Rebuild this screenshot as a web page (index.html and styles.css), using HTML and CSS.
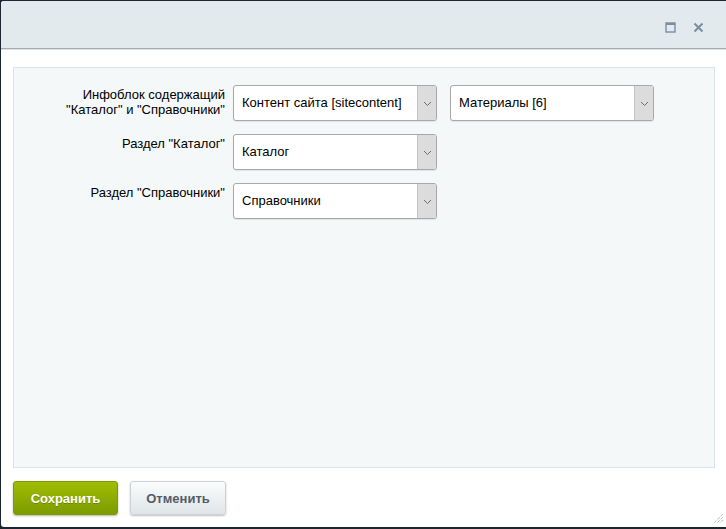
FILE: index.html
```html
<!DOCTYPE html>
<html lang="ru">
<head>
<meta charset="utf-8">
<title>Dialog</title>
<link rel="stylesheet" href="styles.css">
</head>
<body>
<div class="dialog">
  <div class="dialog-head">
    <span class="head-btn">
      <svg width="11" height="11" viewBox="0 0 11 11"><rect x="1" y="1" width="9" height="9" fill="none" stroke="#7b8ca1" stroke-width="1.4"/><rect x="1" y="1" width="9" height="2" fill="#7b8ca1"/></svg>
    </span>
    <span class="head-btn">
      <svg width="11" height="11" viewBox="0 0 11 11"><path d="M1.5 1.5 L9.5 9.5 M9.5 1.5 L1.5 9.5" stroke="#7b8ca1" stroke-width="2" fill="none"/></svg>
    </span>
  </div>
  <div class="dialog-body">
    <div class="panel">
      <div class="form">
        <div class="label">Инфоблок содержащий<br>"Каталог" и "Справочники"</div>
        <div class="controls">
          <div class="select"><span class="select-text">Контент сайта [sitecontent]</span><span class="select-arrow"><svg width="9" height="6" viewBox="0 0 9 6"><path d="M1 1 L4.5 4.5 L8 1" fill="none" stroke="#6f6f6f" stroke-width="1"/></svg></span></div>
          <div class="select"><span class="select-text">Материалы [6]</span><span class="select-arrow"><svg width="9" height="6" viewBox="0 0 9 6"><path d="M1 1 L4.5 4.5 L8 1" fill="none" stroke="#6f6f6f" stroke-width="1"/></svg></span></div>
        </div>
        <div class="label">Раздел "Каталог"</div>
        <div class="controls">
          <div class="select"><span class="select-text">Каталог</span><span class="select-arrow"><svg width="9" height="6" viewBox="0 0 9 6"><path d="M1 1 L4.5 4.5 L8 1" fill="none" stroke="#6f6f6f" stroke-width="1"/></svg></span></div>
        </div>
        <div class="label">Раздел "Справочники"</div>
        <div class="controls">
          <div class="select"><span class="select-text">Справочники</span><span class="select-arrow"><svg width="9" height="6" viewBox="0 0 9 6"><path d="M1 1 L4.5 4.5 L8 1" fill="none" stroke="#6f6f6f" stroke-width="1"/></svg></span></div>
        </div>
      </div>
    </div>
    <div class="buttons">
      <button class="btn btn-save">Сохранить</button>
      <button class="btn btn-cancel">Отменить</button>
    </div>
    <span class="grip">
      <svg width="11" height="11" viewBox="0 0 11 11">
        <path d="M10 1 L1 10 M10 4 L4 10 M10 7 L7 10" stroke="#9aa3aa" stroke-width="1" stroke-dasharray="1 1" fill="none"/>
      </svg>
    </span>
  </div>
</div>
</body>
</html>
```
FILE: styles.css
```css
html, body {
  margin: 0;
  padding: 0;
}
body {
  background: #1c2630;
  width: 726px;
  height: 529px;
  overflow: hidden;
  font-family: "Liberation Sans", Arial, sans-serif;
  font-size: 13px;
  color: #000;
}
.dialog {
  margin: 1px 0 0 1px;
  height: 526px;
  background: #fff;
  border-top-left-radius: 3px;
  border-bottom-left-radius: 3px;
  display: flex;
  flex-direction: column;
  overflow: hidden;
}
.dialog-head {
  flex-shrink: 0;
  height: 47px;
  background: #e2eaed;
  border-bottom: 1px solid #a4abb0;
  box-shadow: 0 1px 0 #dde2e4;
  display: flex;
  justify-content: flex-end;
  align-items: flex-start;
  padding: 0 22px 0 0;
  gap: 17px;
}
.head-btn {
  display: flex;
  margin-top: 21px;
  width: 11px;
  height: 11px;
}
.dialog-body {
  flex: 1;
  padding: 18px 11px 0 12px;
  display: flex;
  flex-direction: column;
  position: relative;
}
.panel {
  flex-shrink: 0;
  box-sizing: border-box;
  height: 401px;
  border: 1px solid #d8e3e9;
  background: #f5f8f9;
  padding-top: 17px;
}
.form {
  display: grid;
  grid-template-columns: 211px auto;
  column-gap: 8px;
  row-gap: 13px;
}
.label {
  text-align: right;
  color: #000;
  line-height: 15px;
  padding-top: 2px;
}
.controls {
  display: flex;
  gap: 13px;
}
.select {
  width: 202px;
  height: 34px;
  border: 1px solid #a8a8a8;
  border-radius: 3px;
  background: #fff;
  box-shadow: 0 1px 1px rgba(0,0,0,0.08);
  display: flex;
  overflow: hidden;
}
.select-text {
  flex: 1;
  padding-left: 8px;
  line-height: 34px;
  white-space: nowrap;
}
.select-arrow {
  width: 18px;
  background: #dcdcdc;
  border-left: 1px solid #c4c4c4;
  display: flex;
  align-items: center;
  justify-content: center;
  padding-top: 2px;
}
.buttons {
  display: flex;
  gap: 12px;
  padding-top: 13px;
}
.btn {
  height: 34px;
  border-radius: 3px;
  font-family: "Liberation Sans", Arial, sans-serif;
  font-size: 13px;
  font-weight: bold;
  padding: 0;
  cursor: pointer;
}
.btn-save {
  width: 105px;
  color: #fff;
  border: 1px solid #7c9a04;
  background: linear-gradient(#a0bd01, #7d9b00);
  box-shadow: 0 1px 2px rgba(0,0,0,0.3);
  text-shadow: 0 1px 0 rgba(0,0,0,0.2);
}
.btn-cancel {
  width: 96px;
  color: #535c69;
  border: 1px solid #cdd2d5;
  background: linear-gradient(#fbfcfc, #dfe5e8);
  box-shadow: 0 1px 2px rgba(0,0,0,0.25);
}
.grip {
  position: absolute;
  right: 2px;
  bottom: 3px;
  display: flex;
}
```
